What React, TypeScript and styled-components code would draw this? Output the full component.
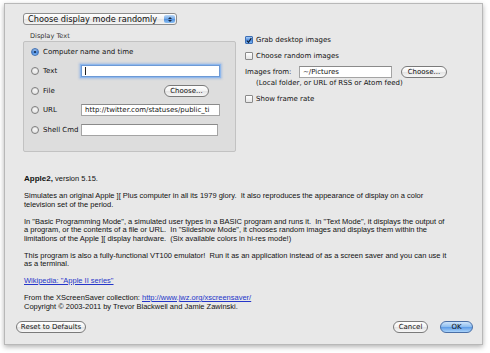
import React from 'react';
import styled, { createGlobalStyle, css } from 'styled-components';

const UI = `"DejaVu Sans", "Open Sans", sans-serif`;
const BODY = `"Liberation Sans", Arial, sans-serif`;

const GlobalStyle = createGlobalStyle`
  html, body {
    margin: 0;
    padding: 0;
    background: #ffffff;
  }
  body {
    width: 490px;
    height: 353px;
    overflow: hidden;
  }
`;

const Sheet = styled.div`
  margin: 3px 0 0 4px;
  width: 479px;
  height: 342px;
  box-sizing: border-box;
  background: #e8e8e8;
  border: 1px solid #b8b8b8;
  box-shadow: 0 2px 5px rgba(0, 0, 0, 0.3);
  padding: 9px 9px 11px 11px;
  display: flex;
  flex-direction: column;
  font-family: ${UI};
  font-size: 7px;
  color: #111;
`;

const Top = styled.div`
  display: flex;
  padding-left: 7px;
`;

const LeftCol = styled.div`
  width: 213px;
  display: flex;
  flex-direction: column;
`;

const RightCol = styled.div`
  margin-left: 9px;
  padding-top: 19px;
  display: flex;
  flex-direction: column;
`;

const Popup = styled.div`
  width: 154px;
  height: 12px;
  box-sizing: border-box;
  border: 1px solid #8c8c8c;
  border-radius: 3px;
  background: linear-gradient(#ffffff, #f1f1f1 50%, #e4e4e4 51%, #f4f4f4);
  display: flex;
  align-items: center;
  padding-left: 4px;
  font-size: 8.2px;
  position: relative;
`;

const Stepper = styled.span`
  position: absolute;
  right: 1px;
  top: 1px;
  bottom: 1px;
  width: 11px;
  border-radius: 2px;
  background: linear-gradient(#bcd9f7, #6fa6e6 50%, #4f8fdd 51%, #8cc0f2);
  display: flex;
  flex-direction: column;
  align-items: center;
  justify-content: center;
  gap: 1px;
`;

const Arrow = styled.span<{ $down?: boolean }>`
  width: 0;
  height: 0;
  border-left: 2px solid transparent;
  border-right: 2px solid transparent;
  ${({ $down }) =>
    $down ? 'border-top: 2px solid #1a2a44;' : 'border-bottom: 2px solid #1a2a44;'}
`;

const BoxLabel = styled.div`
  margin: 7px 0 0 7px;
  height: 9px;
  line-height: 9px;
  font-size: 6.6px;
  color: #333;
`;

const GroupBox = styled.div`
  height: 111px;
  box-sizing: border-box;
  border: 1px solid #c2c2c2;
  border-radius: 2px;
  background: #dddddd;
  padding-left: 7px;
  display: grid;
  grid-template-columns: 50px 140px;
  grid-auto-rows: 19.5px;
  align-content: start;
  align-items: center;
`;

const RadioLabel = styled.label<{ $wide?: boolean }>`
  display: flex;
  align-items: center;
  gap: 4px;
  white-space: nowrap;
  ${({ $wide }) => $wide && 'grid-column: 1 / span 2;'}
`;

const RadioDot = styled.span<{ $on?: boolean }>`
  width: 8px;
  height: 8px;
  box-sizing: border-box;
  border-radius: 50%;
  border: 1px solid #7d7d7d;
  background: linear-gradient(#ffffff, #e2e2e2);
  box-shadow: inset 0 1px 1px rgba(0, 0, 0, 0.12);
  position: relative;
  ${({ $on }) =>
    $on &&
    css`
      border-color: #3e6fb5;
      background: linear-gradient(#a9cdf5, #4d8be0 55%, #7db5f0);
      &::after {
        content: '';
        position: absolute;
        left: 2px;
        top: 2px;
        width: 2px;
        height: 2px;
        border-radius: 50%;
        background: #10233f;
      }
    `}
`;

const Field = styled.div<{ $width?: number; $focus?: boolean }>`
  width: ${({ $width }) => $width ?? 139}px;
  height: 12px;
  box-sizing: border-box;
  border: 1px solid #a4a4a4;
  border-top-color: #8a8a8a;
  background: #fff;
  padding: 0 3px;
  line-height: 10px;
  font-size: 7px;
  white-space: nowrap;
  overflow: hidden;
  ${({ $focus }) =>
    $focus &&
    css`
      border-color: #6d9ad6;
      box-shadow: 0 0 0 1px #8fb8ec, 0 0 2px 2px rgba(110, 160, 230, 0.45);
    `}
`;

const Caret = styled.span`
  display: inline-block;
  width: 1px;
  height: 8px;
  margin-top: 1px;
  background: #222;
`;

const Pill = styled.button<{ $width: number; $blue?: boolean }>`
  width: ${({ $width }) => $width}px;
  height: 12px;
  padding: 0;
  box-sizing: border-box;
  border: 1px solid #7a7a7a;
  border-radius: 6px;
  background: linear-gradient(#ffffff, #f3f3f3 50%, #e3e3e3 51%, #f7f7f7);
  font-family: ${UI};
  font-size: 7px;
  line-height: 10px;
  color: #111;
  ${({ $blue }) =>
    $blue &&
    css`
      border-color: #4a6fa6;
      background: linear-gradient(#cfe5fb, #8bbcef 50%, #5c9ae6 51%, #a9d3fa);
    `}
`;

const FileButton = styled(Pill)`
  justify-self: end;
  margin-right: 12px;
`;

const SourceButton = styled(Pill)`
  margin-left: 9px;
`;

const CheckRow = styled.label`
  height: 16px;
  display: flex;
  align-items: center;
  gap: 3px;
  white-space: nowrap;
`;

const CheckBox = styled.span<{ $on?: boolean }>`
  width: 8px;
  height: 8px;
  box-sizing: border-box;
  border: 1px solid #8a8a8a;
  border-radius: 1px;
  background: linear-gradient(#ffffff, #e4e4e4);
  display: flex;
  align-items: center;
  justify-content: center;
  ${({ $on }) =>
    $on &&
    css`
      border-color: #3e6fb5;
      background: linear-gradient(#a9cdf5, #4d8be0 55%, #7db5f0);
    `}
`;

const SourceRow = styled.div`
  height: 15px;
  display: flex;
  align-items: center;
`;

const SourceLabel = styled.span`
  width: 54px;
`;

const Note = styled.div`
  height: 8px;
  line-height: 8px;
  padding-left: 11px;
  margin-bottom: 4px;
  white-space: nowrap;
`;

const Description = styled.div`
  margin-top: 23px;
  padding-left: 8px;
  width: 424px;
  font-family: ${BODY};
  font-size: 7.5px;
  line-height: 8.5px;
  color: #111;

  p {
    margin: 0 0 8.5px;
  }
  b {
    font-size: 8px;
  }
  a {
    color: #2536c9;
    text-decoration: underline;
  }
`;

const ButtonBar = styled.div`
  margin-top: auto;
  display: flex;
  align-items: center;
  gap: 12px;
`;

const Spacer = styled.div`
  flex: 1;
`;

function Check() {
  return (
    <svg width="7" height="7" viewBox="0 0 7 7">
      <path d="M1 3.6 L2.9 5.6 L6.2 0.8" fill="none" stroke="#0d1c33" strokeWidth="1.3" />
    </svg>
  );
}

export default function App() {
  return (
    <>
      <GlobalStyle />
      <Sheet>
        <Top>
          <LeftCol>
            <Popup>
              Choose display mode randomly
              <Stepper>
                <Arrow />
                <Arrow $down />
              </Stepper>
            </Popup>
            <BoxLabel>Display Text</BoxLabel>
            <GroupBox>
              <RadioLabel $wide>
                <RadioDot $on />
                Computer name and time
              </RadioLabel>
              <RadioLabel>
                <RadioDot />
                Text
              </RadioLabel>
              <Field $focus>
                <Caret />
              </Field>
              <RadioLabel>
                <RadioDot />
                File
              </RadioLabel>
              <FileButton $width={45}>Choose...</FileButton>
              <RadioLabel>
                <RadioDot />
                URL
              </RadioLabel>
              <Field>http://twitter.com/statuses/public_ti</Field>
              <RadioLabel>
                <RadioDot />
                Shell Cmd
              </RadioLabel>
              <Field $width={137} />
            </GroupBox>
          </LeftCol>
          <RightCol>
            <CheckRow>
              <CheckBox $on>
                <Check />
              </CheckBox>
              Grab desktop images
            </CheckRow>
            <CheckRow>
              <CheckBox />
              Choose random images
            </CheckRow>
            <SourceRow>
              <SourceLabel>Images from:</SourceLabel>
              <Field $width={93}>~/Pictures</Field>
              <SourceButton $width={46}>Choose...</SourceButton>
            </SourceRow>
            <Note>(Local folder, or URL of RSS or Atom feed)</Note>
            <CheckRow>
              <CheckBox />
              Show frame rate
            </CheckRow>
          </RightCol>
        </Top>
        <Description>
          <p>
            <b>Apple2,</b> version 5.15.
          </p>
          <p>
            Simulates an original Apple ][ Plus computer in all its 1979 glory.&nbsp; It also
            reproduces the appearance of display on a color television set of the period.
          </p>
          <p>
            In "Basic Programming Mode", a simulated user types in a BASIC program and runs
            it.&nbsp; In "Text Mode", it displays the output of a program, or the contents of a
            file or URL.&nbsp; In "Slideshow Mode", it chooses random images and displays them
            within the limitations of the Apple ][ display hardware.&nbsp; (Six available colors
            in hi-res mode!)
          </p>
          <p>
            This program is also a fully-functional VT100 emulator!&nbsp; Run it as an application
            instead of as a screen saver and you can use it as a terminal.
          </p>
          <p>
            <a href="#">Wikipedia: "Apple II series"</a>
          </p>
          <p>
            From the XScreenSaver collection:{' '}
            <a href="#">http://www.jwz.org/xscreensaver/</a>
            <br />
            Copyright © 2003-2011 by Trevor Blackwell and Jamie Zawinski.
          </p>
        </Description>
        <ButtonBar>
          <Pill $width={70}>Reset to Defaults</Pill>
          <Spacer />
          <Pill $width={35}>Cancel</Pill>
          <Pill $width={33} $blue>
            OK
          </Pill>
        </ButtonBar>
      </Sheet>
    </>
  );
}
